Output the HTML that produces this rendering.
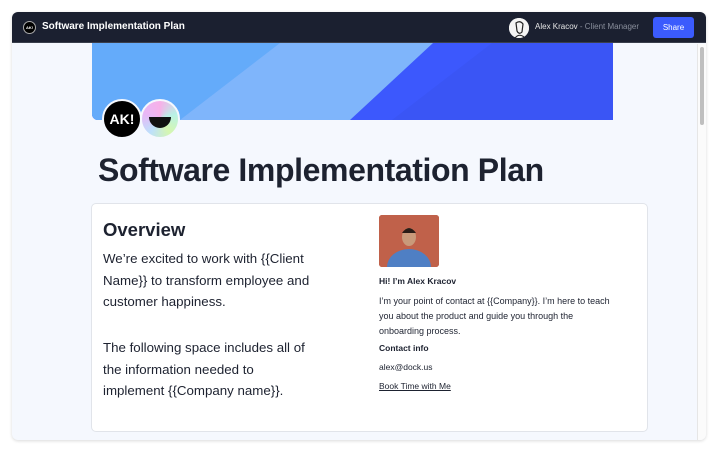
<!DOCTYPE html>
<html><head><style>
*{margin:0;padding:0;box-sizing:border-box}
body{width:719px;height:459px;background:#fff;font-family:"Liberation Sans",sans-serif;position:relative;overflow:hidden;color:#1d2230}
.win{position:absolute;left:12px;top:12px;width:694px;height:428px;border-radius:6px;background:#f5f8fe;overflow:hidden;box-shadow:0 1px 3px rgba(0,0,0,.15)}
.hdr{position:absolute;left:0;top:0;width:694px;height:31px;background:#1b2030;border-bottom:1px solid #3a3f4c}
.logo{position:absolute;left:11px;top:9px;width:13px;height:13px;border-radius:50%;background:#000;border:1px solid #aaa;color:#fff;font-size:4px;font-weight:bold;text-align:center;line-height:11px}
.ttl{position:absolute;left:30px;top:9px;color:#fff;font-size:10px;font-weight:bold}
.av{position:absolute;left:497px;top:6px;width:20px;height:20px;border-radius:50%;background:#f2f2f2}
.nm{position:absolute;left:523px;top:10px;font-size:8px;color:#e6e6e6}
.nm span{color:#8a8f9c}
.share{position:absolute;left:641px;top:5px;width:41px;height:21px;background:#3b5bfd;border-radius:3px;color:#fff;font-size:8px;text-align:center;line-height:21px}
.sb{position:absolute;left:685px;top:32px;width:9px;height:396px;background:#fbfbfb;border-left:1px solid #e6e6e6}
.sb div{position:absolute;left:2px;top:3px;width:4px;height:78px;background:#bfbfbf;border-radius:2px}
.ban{position:absolute;left:80px;top:31px;width:521px;height:77px;border-radius:0 0 0 6px;overflow:hidden;background:#3c58fd}
.c1{position:absolute;left:102px;top:99px;width:40px;height:40px;border-radius:50%;background:#000;color:#fff;font-weight:bold;font-size:14px;text-align:center;line-height:37px;border:2px solid #f5f8fe}
.c2{position:absolute;left:140px;top:99px;width:40px;height:40px;border-radius:50%;background:conic-gradient(#f7b0e8,#b9f1e6,#d6f7b0,#bde0fb,#e8b7f6,#f7b0e8);border:2px solid #f5f8fe}
.c2 div{position:absolute;left:7px;top:16px;width:22px;height:11px;background:#111;border-radius:0 0 11px 11px}
h1{position:absolute;left:98px;top:152px;font-size:32px;font-weight:bold;color:#1d2230;letter-spacing:-.4px;white-space:nowrap}
.card{position:absolute;left:91px;top:203px;width:557px;height:229px;background:#fff;border:1px solid #e1e4ea;border-radius:5px}
.ov{position:absolute;left:11px;top:15px;font-size:18.5px;font-weight:bold}
.p{position:absolute;left:11px;font-size:13.3px;line-height:21.5px;color:#1d2230;white-space:nowrap}
.photo{position:absolute;left:287px;top:11px;width:60px;height:52px;border-radius:3px;background:#c0614a;overflow:hidden}
.r{position:absolute;left:287px;font-size:8.5px;color:#1d2230;white-space:nowrap}
</style></head><body>
<div class="win">
<div class="hdr">
<div class="logo">AK!</div><div class="ttl">Software Implementation Plan</div>
<div class="av"><svg width="20" height="20"><circle cx="10" cy="10" r="10" fill="#f4f4f4"/><path d="M7 5 Q11 2 14 6 L13 14 Q10 17 8 13 Z" fill="none" stroke="#222" stroke-width="1.2"/><path d="M6 20 Q10 15 15 19" stroke="#222" fill="none"/></svg></div>
<div class="nm">Alex Kracov <span>- Client Manager</span></div>
<div class="share">Share</div>
</div>
<div class="ban"><svg width="521" height="77"><rect width="521" height="77" fill="#3c58fd"/><polygon points="400,0 521,0 521,77 300,77" fill="#3a55f5"/><polygon points="0,0 341,0 258,77 0,77" fill="#7fb5fb"/><polygon points="0,0 188,0 88,77 0,77" fill="#64abfa"/></svg></div>
<div class="sb"><div></div></div>
</div>
<div class="c1">AK!</div>
<div class="c2"><div></div></div>
<h1>Software Implementation Plan</h1>
<div class="card">
<div class="ov">Overview</div>
<div class="p" style="top:44px">We’re excited to work with {{Client<br>Name}} to transform employee and<br>customer happiness.</div>
<div class="p" style="top:133px">The following space includes all of<br>the information needed to<br>implement {{Company name}}.</div>
<div class="photo"><svg width="60" height="52"><rect width="60" height="52" fill="#c0614a"/><ellipse cx="30" cy="52" rx="22" ry="18" fill="#4f7fc4"/><ellipse cx="30" cy="22" rx="7" ry="9" fill="#c99a7a"/><path d="M23 18 Q30 8 37 18" fill="#2a1c16"/></svg></div>
<div class="r" style="top:72px;font-weight:bold">Hi! I’m Alex Kracov</div>
<div class="r" style="top:90px;line-height:14.8px;font-size:9px">I’m your point of contact at {{Company}}. I’m here to teach<br>you about the product and guide you through the<br>onboarding process.</div>
<div class="r" style="top:139px;font-weight:bold">Contact info</div>
<div class="r" style="top:158px">alex@dock.us</div>
<div class="r" style="top:177px;text-decoration:underline">Book Time with Me</div>
</div>
</body></html>
